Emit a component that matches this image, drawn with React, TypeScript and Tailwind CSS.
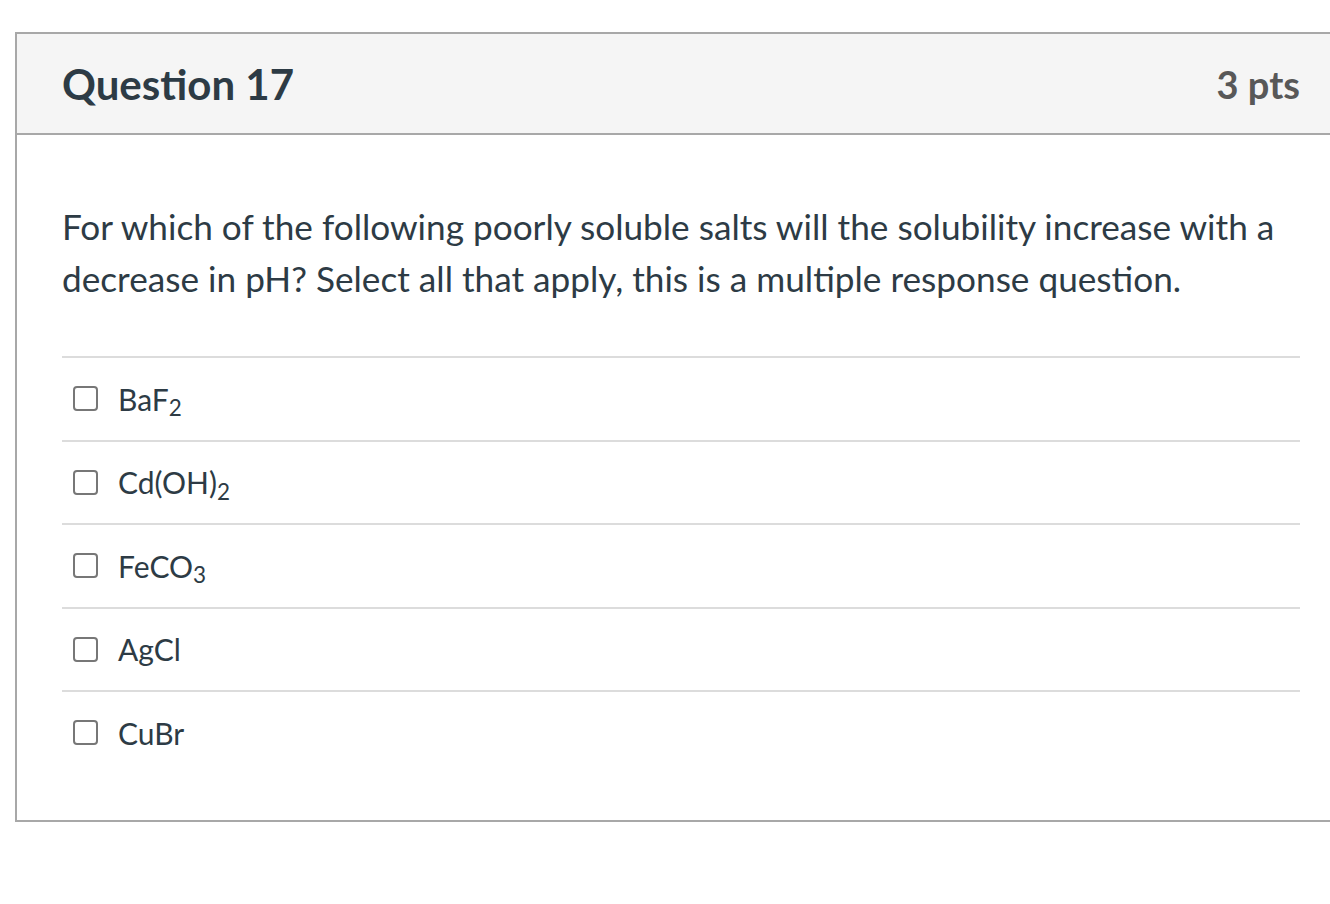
const options = [
  { id: 1, label: 'BaF', sub: '2' },
  { id: 2, label: 'Cd(OH)', sub: '2' },
  { id: 3, label: 'FeCO', sub: '3' },
  { id: 4, label: 'AgCl', sub: '' },
  { id: 5, label: 'CuBr', sub: '' },
];

const App = () => {
  return (
    <div className="w-[1330px] h-[904px] overflow-hidden bg-white pt-[32px] pl-[15px] font-['Lato','Liberation_Sans',sans-serif] text-[#2d3b45]">
      <div className="w-[1340px] border-2 border-r-0 border-[#a8a8a8]">
        {/* Header */}
        <div className="h-[101px] bg-[#f5f5f5] border-b-2 border-[#a8a8a8] flex items-center justify-between pl-[45px] pr-[55px]">
          <h2 className="text-[42px] font-bold leading-none">Question 17</h2>
          <span className="text-[38px] font-bold text-[#585858] leading-none">3 pts</span>
        </div>

        {/* Body */}
        <div className="pl-[45px] pr-[55px] pt-[65px] pb-[46px]">
          <p className="text-[35.2px] leading-[52px]">
            For which of the following poorly soluble salts will the solubility increase with a decrease in pH? Select all that apply, this is a multiple response question.
          </p>

          <div className="mt-[52px]">
            {options.map((opt) => (
              <label key={opt.id} className="flex items-center h-[83.5px] border-t-2 border-[#dcdcdc]">
                <span className="ml-[11px] w-[25px] h-[25px] rounded-[4px] border-2 border-[#777] bg-white" />
                <span className="ml-[20px] text-[30px] leading-none">
                  {opt.label}
                  {opt.sub && <sub>{opt.sub}</sub>}
                </span>
              </label>
            ))}
          </div>
        </div>
      </div>
    </div>
  );
};

export default App;
